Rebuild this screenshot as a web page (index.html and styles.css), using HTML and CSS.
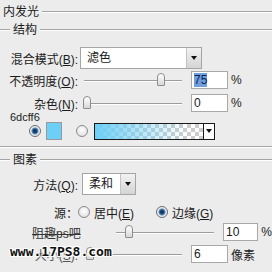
FILE: index.html
```html
<!DOCTYPE html>
<html lang="zh-CN">
<head>
    <meta charset="UTF-8">
    <meta name="viewport" content="width=device-width, initial-scale=1.0">
    <title>内发光</title>
    <link rel="stylesheet" href="styles.css">
</head>
<body>
    <div class="panel">
        <div class="legend title"><span>内发光</span><i class="rule"></i></div>
        <div class="legend group"><i class="stub"></i><span>结构</span><i class="rule"></i></div>

        <div class="row row-blend">
            <label class="lbl">混合模式(<u>B</u>):</label>
            <div class="select blend"><span>滤色</span><b class="arrow"></b></div>
        </div>
        <div class="row row-opacity">
            <label class="lbl">不透明度(<u>O</u>):</label>
            <div class="slider"><span class="thumb" style="left: 75%"></span></div>
            <div class="field"><span class="sel">75</span></div>
            <span class="unit">%</span>
        </div>
        <div class="row row-noise">
            <label class="lbl">杂色(<u>N</u>):</label>
            <div class="slider"><span class="thumb" style="left: 0%"></span></div>
            <div class="field">0</div>
            <span class="unit">%</span>
        </div>

        <div class="hex">6dcff6</div>
        <div class="swatches">
            <span class="radio on"></span>
            <span class="swatch"></span>
            <span class="radio gap"></span>
            <div class="gradient"><span class="ramp"></span><b class="arrow"></b></div>
        </div>

        <div class="divider"></div>
        <div class="legend group group-2"><i class="stub"></i><span>图素</span><i class="rule"></i></div>

        <div class="row row-method">
            <label class="lbl">方法(<u>Q</u>):</label>
            <div class="select method"><span>柔和</span><b class="arrow"></b></div>
        </div>
        <div class="row row-source">
            <label class="lbl">源：</label>
            <div class="option"><span class="radio"></span><span>居中(<u>E</u>)</span></div>
            <div class="option"><span class="radio on"></span><span>边缘(<u>G</u>)</span></div>
        </div>
        <div class="row row-choke">
            <label class="lbl mark">阻趣ps吧</label>
            <div class="slider"><span class="thumb" style="left: 10%"></span></div>
            <div class="field">10</div>
            <span class="unit">%</span>
        </div>
        <div class="row row-size">
            <label class="lbl faded">大小(<u>S</u>):</label>
            <div class="slider"><span class="thumb" style="left: 3%"></span></div>
            <div class="field">6</div>
            <span class="unit">像素</span>
        </div>

        <div class="watermark">www.17PS8.com</div>
    </div>
</body>
</html>
```

FILE: styles.css
```css
body {
    margin: 0;
    background-color: #ececec;
    font-family: "Liberation Sans", "Noto Sans CJK SC", sans-serif;
    font-size: 12px;
    color: #1b1b1b;
}
.panel {
    position: relative;
    width: 272px;
    height: 272px;
    overflow: hidden;
}

/* group titles with etched lines */
.legend {
    display: flex;
    align-items: center;
}
.legend span {
    line-height: 14px;
}
.title {
    height: 23px;
    padding-left: 3px;
}
.title .rule {
    margin-left: 3px;
}
.group {
    height: 14px;
}
.group span {
    padding: 0 3px;
}
.group-2 {
    margin-top: 5px;
}
.stub {
    width: 10px;
}
.rule {
    flex: 1;
}
.rule, .stub, .divider {
    height: 0;
    border-top: 1px solid #a4a4a4;
    border-bottom: 1px solid #fff;
}
.divider {
    margin-top: 6px;
}

/* form rows */
.row {
    display: flex;
    align-items: center;
}
.lbl {
    flex: none;
    width: 78px;
    text-align: right;
    white-space: nowrap;
}
.row-blend {
    margin-top: 10px;
    height: 22px;
}
.row-opacity {
    margin-top: 2px;
    height: 18px;
}
.row-noise {
    margin-top: 5px;
    height: 18px;
}
.row-method {
    margin-top: 6px;
    height: 22px;
}
.row-source {
    margin-top: 9px;
    height: 16px;
}
.row-choke {
    margin-top: 3px;
    height: 18px;
}
.row-size {
    margin-top: 4px;
    height: 18px;
}

.select {
    display: flex;
    box-sizing: border-box;
    height: 22px;
    border: 1px solid #a5a5a5;
    background: #fff;
}
.select span {
    flex: 1;
    padding-left: 6px;
    line-height: 20px;
}
.blend {
    width: 122px;
    margin-left: 2px;
}
.method {
    width: 54px;
    margin-left: 4px;
}
.arrow {
    display: flex;
    align-items: center;
    justify-content: center;
    width: 14px;
    border-left: 1px solid #c4c4c4;
    background: linear-gradient(#f2f2f2, #d4d4d4);
}
.arrow::after {
    content: "";
    border-top: 4px solid #111;
    border-left: 3px solid transparent;
    border-right: 3px solid transparent;
}

.slider {
    position: relative;
    flex: none;
    width: 98px;
    height: 14px;
    margin-left: 6px;
    background:
        linear-gradient(#9c9c9c, #9c9c9c) 0 7px / 100% 1px no-repeat,
        linear-gradient(#fff, #fff) 0 8px / 100% 1px no-repeat;
}
.thumb {
    position: absolute;
    top: 0;
    box-sizing: border-box;
    width: 8px;
    height: 13px;
    margin-left: -1px;
    border: 1px solid #8c8c8c;
    border-radius: 4px 4px 1px 1px;
    background: linear-gradient(#fff, #d8d8d8);
}

.field {
    box-sizing: border-box;
    width: 37px;
    height: 18px;
    margin-left: 9px;
    padding-left: 2px;
    border: 1px solid #a9a9a9;
    background: #fff;
    line-height: 16px;
}
.sel {
    background: #6f9fdc;
    color: #0b1f5c;
}
.unit {
    margin-left: 3px;
}

/* colour choice */
.hex {
    height: 9px;
    margin-top: 1px;
    padding-left: 10px;
    font-size: 11px;
    line-height: 9px;
}
.swatches {
    display: flex;
    align-items: center;
    height: 18px;
    padding-left: 29px;
}
.radio {
    flex: none;
    box-sizing: border-box;
    width: 12px;
    height: 12px;
    border: 1px solid #8a8a8a;
    border-radius: 50%;
    background: radial-gradient(circle at 50% 40%, #fff 0, #e4e4e4 70%, #cfcfcf 100%);
}
.radio.on {
    border-color: #6b6b6b;
    background: radial-gradient(circle, #0c2440 0, #1f4f80 2px, #5b8dbd 3px, #e6ecf2 4px, #f6f6f6 6px);
}
.radio.gap {
    margin-left: 14px;
}
.swatch {
    width: 16px;
    height: 18px;
    margin-left: 5px;
    box-sizing: border-box;
    border: 1px solid #9a9a9a;
    background: #6dcff6;
}
.gradient {
    display: flex;
    box-sizing: border-box;
    width: 121px;
    height: 17px;
    margin-left: 6px;
    border: 1px solid #1a1a1a;
}
.ramp {
    flex: 1;
    background:
        linear-gradient(to right, #6dcff6, rgba(109, 207, 246, 0) 85%),
        conic-gradient(#cdcdcd 25%, #fff 0 50%, #cdcdcd 0 75%, #fff 0) 0 0 / 8px 8px;
}
.gradient .arrow {
    width: 10px;
    border-left-color: #1a1a1a;
    background: #fff;
}

.option {
    display: flex;
    align-items: center;
    gap: 4px;
    width: 78px;
}

/* watermark over the lower rows */
.mark {
    text-align: left;
    padding-left: 32px;
    color: #333;
    text-decoration: line-through;
}
.faded {
    color: #555;
}
.watermark {
    position: absolute;
    left: 10px;
    top: 244px;
    font-family: "DejaVu Sans Mono", monospace;
    font-size: 13px;
    font-weight: bold;
    color: #111;
    text-shadow: 1px 1px 0 #fff, -1px -1px 0 #fff, 1px -1px 0 #fff, -1px 1px 0 #fff;
}
```
